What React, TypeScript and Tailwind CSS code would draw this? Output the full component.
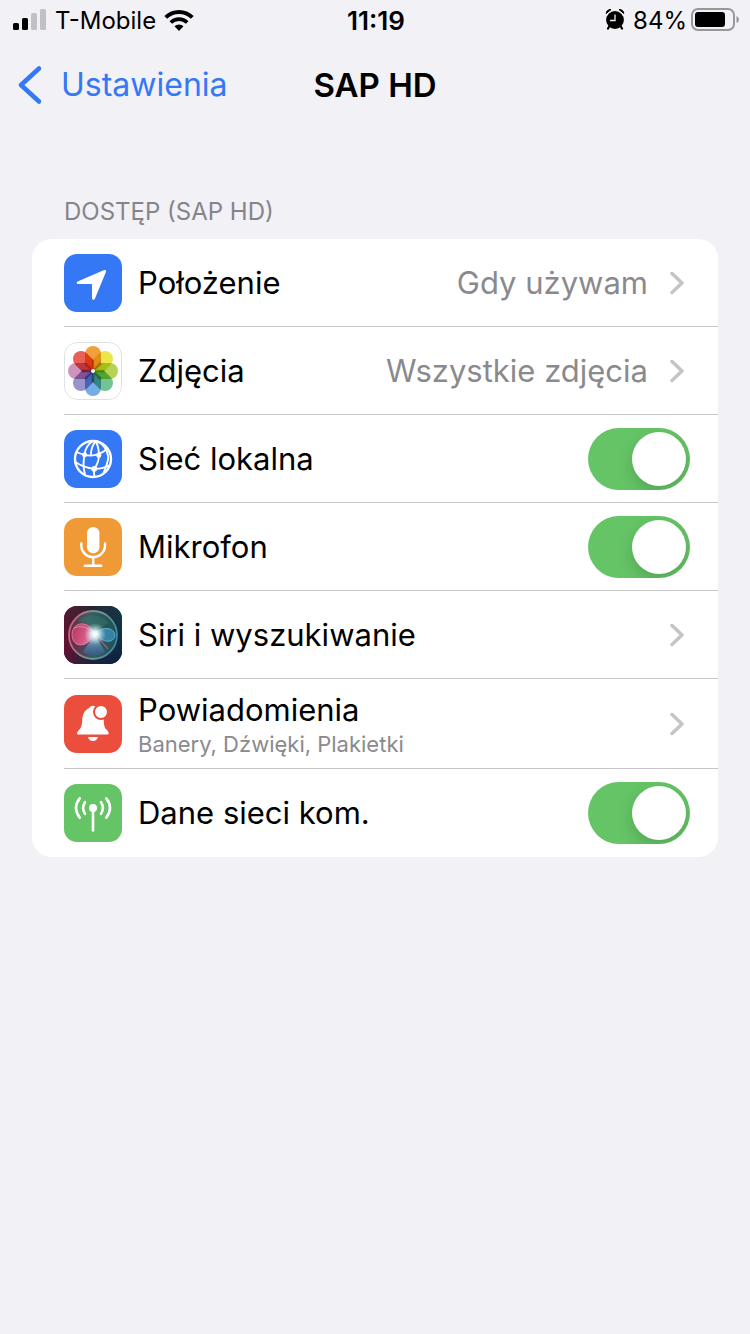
import { useState } from "react";
import type { ReactNode } from "react";

const petals = ["#f2a03d", "#ebe44a", "#b5d455", "#74c493", "#74aee2", "#9a94cc", "#cf93bd", "#ea5f56"];

function LocationIcon() {
  return (
    <svg viewBox="0 0 58 58" className="size-full" aria-hidden="true">
      <path
        d="M13.6 27.4 40.2 16Q42.7 15.4 42 17.8L31 44.6Q30.3 46 29.2 45.8Q28 45.6 28 44.2V31Q28 30 27 30H14Q12.7 30 12.7 29Q12.6 27.9 13.6 27.4Z"
        fill="#fff"
      />
    </svg>
  );
}

function PhotosIcon() {
  return (
    <svg viewBox="0 0 58 58" className="size-full isolate" aria-hidden="true">
      <rect width="58" height="58" fill="#fff" />
      {petals.map((color, i) => (
        <path
          key={color}
          d="M29 29.5 21 22V12A8 8 0 0 1 37 12V22Z"
          fill={color}
          transform={`rotate(${i * 45} 29 29)`}
          className="mix-blend-multiply"
        />
      ))}
      {petals.map((color, i) => (
        <path
          key={color}
          d="M21 18V22L29 29.5 37 22V18L29 26Z"
          fill={color}
          opacity="0.35"
          transform={`rotate(${i * 45} 29 29)`}
          className="mix-blend-multiply"
        />
      ))}
      <circle cx="29" cy="29" r="2" fill="#fff" />
      <rect x="0.5" y="0.5" width="57" height="57" rx="12.5" fill="none" stroke="#e1e1e3" />
    </svg>
  );
}

function GlobeIcon() {
  return (
    <svg viewBox="0 0 58 58" className="size-full" fill="none" stroke="#fff" strokeWidth="1.9" aria-hidden="true">
      <circle cx="29" cy="29" r="18" strokeWidth="2.4" />
      <path d="M29 11C24 14 21 19 20.5 25C19.2 31 19.2 38 21 44.5" />
      <path d="M32.5 11C28.5 14 27 19 26.8 25.5" />
      <path d="M31.5 11C34 15 35 20 34.8 25.5C35 31 33 35 30.3 39C29.8 42 30 45 30.5 47" />
      <path d="M34 11.5C40 15 43.5 21 44.3 27C44 32 42.5 36 39.5 43" />
      <path d="M12.5 22Q20 25.6 27 25.6T43.5 19" />
      <path d="M11.2 32Q20 37.8 30 38.8Q39 39 46 35" />
      <g fill="#fff" stroke="none">
        <circle cx="20.6" cy="24.8" r="2.5" />
        <circle cx="34.8" cy="25.2" r="2.5" />
        <circle cx="30.2" cy="38.8" r="2.9" />
      </g>
    </svg>
  );
}

function MicrophoneIcon() {
  return (
    <svg viewBox="0 0 58 58" className="size-full" fill="none" stroke="#fff" strokeWidth="2.4" strokeLinecap="round" aria-hidden="true">
      <rect x="23" y="9" width="12.4" height="26.4" rx="6.2" fill="#fff" stroke="none" />
      <path d="M17.3 25.5V28.5A11.9 11.9 0 0 0 41 28.5V25.5M29.2 41V47.5M20.8 47.7H37.2" />
    </svg>
  );
}

function SiriIcon() {
  return (
    <svg viewBox="0 0 58 58" className="size-full" aria-hidden="true">
      <defs>
        <linearGradient id="siri-base" x1="0" y1="0" x2="1" y2="0">
          <stop offset="0" stopColor="#6e0d30" />
          <stop offset="0.5" stopColor="#2b2333" />
          <stop offset="1" stopColor="#123a44" />
        </linearGradient>
        <linearGradient id="siri-shade" x1="0" y1="0" x2="0.8" y2="1">
          <stop offset="0" stopColor="#143d2c" stopOpacity="0.3" />
          <stop offset="0.5" stopColor="#142c4c" stopOpacity="0.1" />
          <stop offset="1" stopColor="#0b1c40" stopOpacity="0.7" />
        </linearGradient>
        <linearGradient id="siri-ring" x1="0" y1="0.4" x2="1" y2="0.6">
          <stop offset="0" stopColor="#d0607c" />
          <stop offset="0.5" stopColor="#6a9d8e" />
          <stop offset="1" stopColor="#3c86a8" />
        </linearGradient>
        <linearGradient id="siri-orb" x1="0" y1="0.5" x2="1" y2="0.4">
          <stop offset="0" stopColor="#7a2f4c" />
          <stop offset="0.45" stopColor="#4a7880" />
          <stop offset="1" stopColor="#1f6259" />
        </linearGradient>
        <linearGradient id="siri-pink" x1="0" y1="0.3" x2="1" y2="0.7">
          <stop offset="0" stopColor="#c23a63" />
          <stop offset="0.6" stopColor="#e65a8a" />
          <stop offset="1" stopColor="#f3a9c8" />
        </linearGradient>
        <linearGradient id="siri-fan" x1="0" y1="0" x2="0" y2="1">
          <stop offset="0" stopColor="#a9d0ee" stopOpacity="0.9" />
          <stop offset="1" stopColor="#2c5f9c" stopOpacity="0.4" />
        </linearGradient>
        <radialGradient id="siri-glow">
          <stop offset="0" stopColor="#fff" />
          <stop offset="0.3" stopColor="#f4ffff" stopOpacity="0.85" />
          <stop offset="1" stopColor="#b4e4ec" stopOpacity="0" />
        </radialGradient>
      </defs>
      <rect width="58" height="58" fill="url(#siri-base)" />
      <rect width="58" height="58" fill="url(#siri-shade)" />
      <circle cx="29" cy="29" r="24" fill="url(#siri-orb)" fillOpacity="0.65" stroke="url(#siri-ring)" strokeWidth="1.8" />
      <path d="M14 15C22 7 37 8 45 17C39 19 35 23 31 28C27 20 21 16 14 15Z" fill="#2f7a66" fillOpacity="0.5" />
      <path d="M31 28L19 46C25 51 35 51 41 46Z" fill="url(#siri-fan)" />
      <path d="M31 28C25 14 9 15 8 28C8 43 24 42 31 28Z" fill="url(#siri-pink)" fillOpacity="0.9" stroke="#ee86a4" strokeWidth="0.8" />
      <path d="M10 22C20 18 27 24 32 29" fill="none" stroke="#a8d8cf" strokeOpacity="0.7" strokeWidth="0.8" />
      <path d="M31 28C38 20 50 21 51 29C50 38 39 37 31 28Z" fill="#3d93bd" fillOpacity="0.75" stroke="#6cbcd8" strokeWidth="0.8" />
      <path d="M33 30L44 43" stroke="#b8647c" strokeOpacity="0.8" strokeWidth="1.2" />
      <circle cx="31" cy="28" r="11" fill="url(#siri-glow)" />
      <circle cx="31" cy="28" r="5" fill="url(#siri-glow)" />
    </svg>
  );
}

function BellIcon() {
  return (
    <svg viewBox="0 0 58 58" className="size-full" fill="#fff" aria-hidden="true">
      <path d="M25.2 13C26 11.5 27.5 10.8 29 10.8C31 10.8 32 12 32.5 13C36 15 39.5 19 39.8 25C40 31 40.5 33 43 35C44.8 37 45.5 39.5 43.5 39.5H14.5C12.5 39.5 12.8 37.5 14.2 36C17 33 18 31 18.2 25C18.4 19 21 15 25.2 13Z" />
      <path d="M24 42H34C33.5 44.8 31.5 46 29 46C26.5 46 24.5 44.8 24 42Z" />
      <circle cx="37" cy="17" r="7" stroke="#eb4e3d" strokeWidth="2" />
    </svg>
  );
}

function AntennaIcon() {
  return (
    <svg viewBox="0 0 58 58" className="size-full" fill="none" stroke="#fff" strokeWidth="2.6" strokeLinecap="round" aria-hidden="true">
      <circle cx="29" cy="24" r="4" fill="#fff" stroke="none" />
      <path d="M29 25V46.5" />
      <path d="M21 18.2Q17.3 24 21 29.8M37 18.2Q40.7 24 37 29.8M15.7 14.4Q8.3 24 15.7 33.6M42.3 14.4Q49.7 24 42.3 33.6" />
    </svg>
  );
}

function Chevron() {
  return (
    <svg viewBox="0 0 14 24" className="h-6 w-[14px] shrink-0" fill="none" aria-hidden="true">
      <path d="M2 2.5 12 12 2 21.5" stroke="#c5c5c7" strokeWidth="3.5" strokeLinecap="round" strokeLinejoin="round" />
    </svg>
  );
}

function IconTile({ color, children }: { color: string; children: ReactNode }) {
  return <span className={`size-[58px] shrink-0 overflow-hidden rounded-[13px] ${color}`}>{children}</span>;
}

type RowProps = {
  icon: ReactNode;
  color: string;
  label: string;
};

function LinkRow({ icon, color, label, value, detail }: RowProps & { value?: string; detail?: string }) {
  return (
    <li className="ml-8 border-b border-[#c6c6c8] last:border-b-0">
      <a href="#" className={`flex items-center gap-4 pr-[34px] ${detail ? "h-[89px]" : "h-[87px]"}`}>
        <IconTile color={color}>{icon}</IconTile>
        <span className="flex flex-1 flex-col">
          <span className={detail ? "pt-1 leading-9" : "leading-10"}>{label}</span>
          {detail && <span className="text-[22px] leading-8 text-[#8a8a8e]">{detail}</span>}
        </span>
        {value && <span className="mr-1.5 text-[#8a8a8e]">{value}</span>}
        <Chevron />
      </a>
    </li>
  );
}

function ToggleRow({ icon, color, label }: RowProps) {
  const [on, setOn] = useState(true);

  return (
    <li className="ml-8 border-b border-[#c6c6c8] last:border-b-0">
      <label className="flex h-[87px] items-center gap-4 pr-7">
        <IconTile color={color}>{icon}</IconTile>
        <span className="flex-1">{label}</span>
        <input
          type="checkbox"
          role="switch"
          checked={on}
          onChange={() => setOn(!on)}
          className="flex h-[62px] w-[102px] shrink-0 appearance-none items-center overflow-hidden rounded-full bg-[#e9e9ea] p-1 before:size-[54px] before:rounded-full before:bg-white before:shadow-[0_6px_16px_rgba(0,0,0,0.16)] checked:justify-end checked:bg-[#65c466]"
        />
      </label>
    </li>
  );
}

function StatusBar() {
  return (
    <div className="grid h-[42px] grid-cols-[1fr_auto_1fr] items-center pr-[11px] pl-[13px] text-[24px] leading-8">
      <div className="flex items-center gap-2">
        <svg viewBox="0 0 34 22" className="mb-0.5 h-[22px] w-[34px]" aria-hidden="true">
          <rect x="0" y="14" width="6" height="7" rx="1.5" />
          <rect x="9" y="9" width="6" height="12" rx="1.5" />
          <rect x="18" y="4" width="6" height="17" rx="1.5" fill="#c1c0c5" />
          <rect x="27" y="0" width="6" height="21" rx="1.5" fill="#c1c0c5" />
        </svg>
        <span className="whitespace-nowrap">T-Mobile</span>
        <svg viewBox="0 0 30 22" className="mb-0.5 h-[22px] w-[30px]" fill="none" stroke="#000" strokeWidth="4" aria-hidden="true">
          <path d="M1.7 8.4A19 19 0 0 1 28.3 8.4" />
          <path d="M6.8 13.5A11.8 11.8 0 0 1 23.2 13.5" strokeWidth="3.7" />
          <path d="M10.5 17.3A6.5 6.5 0 0 1 19.5 17.3L15 22Z" fill="#000" stroke="none" />
        </svg>
      </div>
      <time className="text-[26px] font-semibold">11:19</time>
      <div className="flex items-center justify-end">
        <svg viewBox="0 0 20 22" className="mr-2 mb-1 h-[22px] w-5 shrink-0" aria-hidden="true">
          <circle cx="10" cy="12" r="8.9" />
          <path d="M4.5 18 3 20.5M15.5 18 17 20.5" stroke="#000" strokeWidth="2.2" strokeLinecap="round" />
          <path d="M1.2 5.5Q1.5 1.5 6 1.5ZM18.8 5.5Q18.5 1.5 14 1.5Z" stroke="#000" strokeLinejoin="round" />
          <path d="M10 6.5V12.5H5" fill="none" stroke="#f2f1f6" strokeWidth="1.3" />
        </svg>
        <span>84%</span>
        <svg viewBox="0 0 48 24" className="mb-0.5 ml-1 h-6 w-12 shrink-0" aria-hidden="true">
          <rect x="1" y="1" width="42" height="21" rx="6" fill="none" stroke="#98979c" strokeWidth="2" />
          <rect x="4" y="4" width="30" height="15" rx="3" />
          <path d="M45.5 8Q48 9 48 11.5Q48 14 45.5 15Z" fill="#98979c" />
        </svg>
      </div>
    </div>
  );
}

export default function App() {
  return (
    <div className="min-h-screen bg-[#f2f1f6] font-['Inter','Liberation_Sans',sans-serif] text-black">
      <StatusBar />

      <header className="grid h-[86px] grid-cols-[1fr_auto_1fr] items-center text-[32px] leading-10">
        <a href="#" className="flex items-center gap-5 pl-[18px] text-[#3478f6]">
          <svg viewBox="0 0 23 38" className="h-[38px] w-[23px]" fill="none" aria-hidden="true">
            <path d="M21 2.5 3 19 21 35.5" stroke="#3478f6" strokeWidth="4.5" strokeLinecap="round" strokeLinejoin="round" />
          </svg>
          Ustawienia
        </a>
        <h1 className="text-[33px] font-semibold">SAP HD</h1>
      </header>

      <main className="px-8 pt-[68px]">
        <h2 className="mb-[11px] pl-8 text-[24px] leading-8 text-[#85848a]">DOSTĘP (SAP HD)</h2>
        <ul className="overflow-hidden rounded-[20px] bg-white pb-px text-[31px] leading-10">
          <LinkRow icon={<LocationIcon />} color="bg-[#3478f6]" label="Położenie" value="Gdy używam" />
          <LinkRow icon={<PhotosIcon />} color="bg-white" label="Zdjęcia" value="Wszystkie zdjęcia" />
          <ToggleRow icon={<GlobeIcon />} color="bg-[#3478f6]" label="Sieć lokalna" />
          <ToggleRow icon={<MicrophoneIcon />} color="bg-[#f09a37]" label="Mikrofon" />
          <LinkRow icon={<SiriIcon />} color="bg-[#17263a]" label="Siri i wyszukiwanie" />
          <LinkRow icon={<BellIcon />} color="bg-[#eb4e3d]" label="Powiadomienia" detail="Banery, Dźwięki, Plakietki" />
          <ToggleRow icon={<AntennaIcon />} color="bg-[#65c466]" label="Dane sieci kom." />
        </ul>
      </main>
    </div>
  );
}
